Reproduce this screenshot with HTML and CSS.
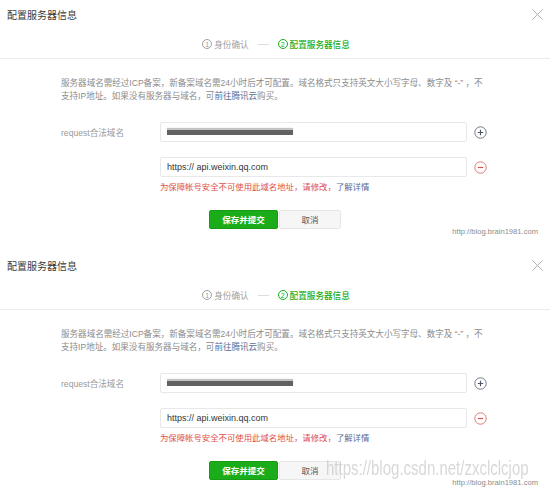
FILE: index.html
```html
<!DOCTYPE html>
<html lang="zh-CN">
<head>
<meta charset="utf-8">
<title>配置服务器信息</title>
<link rel="stylesheet" href="styles.css">
</head>
<body>
<div class="page">
  <section class="dialog">
    <div class="header">
      <span class="title">配置服务器信息</span>
      <svg class="close" width="11" height="11" viewBox="0 0 11 11"><path d="M0.5 0.5 L10.5 10.5 M10.5 0.5 L0.5 10.5" stroke="#a8a8a8" stroke-width="0.9" fill="none"/></svg>
    </div>
    <div class="steps">
      <span class="step done"><span class="num">1</span>身份确认</span>
      <span class="step-line"></span>
      <span class="step current"><span class="num">2</span>配置服务器信息</span>
    </div>
    <div class="body">
      <p class="desc">服务器域名需经过ICP备案，新备案域名需24小时后才可配置。域名格式只支持英文大小写字母、数字及 “-” ，不<br>支持IP地址。如果没有服务器与域名，可<a class="link">前往腾讯云</a>购买。</p>
      <div class="row first">
        <span class="label">request合法域名</span>
        <div class="input"><span class="redacted"></span></div>
        <svg class="icon" width="13" height="13" viewBox="0 0 13 13"><circle cx="6.5" cy="6.5" r="5.7" stroke="#6f7789" stroke-width="1" fill="none"/><path d="M3.8 6.5 H9.2 M6.5 3.8 V9.2" stroke="#4f5668" stroke-width="1.2"/></svg>
      </div>
      <div class="row second">
        <span class="label"></span>
        <div class="input"><span class="val">https:// api.weixin.qq.com</span></div>
        <svg class="icon" width="13" height="13" viewBox="0 0 13 13"><circle cx="6.5" cy="6.5" r="5.7" stroke="#e07a76" stroke-width="1" fill="none"/><path d="M3.8 6.5 H9.2" stroke="#d9534f" stroke-width="1.2"/></svg>
      </div>
      <p class="error">为保障帐号安全不可使用此域名地址，请修改，<a class="link">了解详情</a></p>
      <div class="buttons">
        <button class="btn primary">保存并提交</button>
        <button class="btn default">取消</button>
      </div>
    </div>
    <span class="mark">http://blog.brain1981.com</span>
  </section>

  <section class="dialog">
    <div class="header">
      <span class="title">配置服务器信息</span>
      <svg class="close" width="11" height="11" viewBox="0 0 11 11"><path d="M0.5 0.5 L10.5 10.5 M10.5 0.5 L0.5 10.5" stroke="#a8a8a8" stroke-width="0.9" fill="none"/></svg>
    </div>
    <div class="steps">
      <span class="step done"><span class="num">1</span>身份确认</span>
      <span class="step-line"></span>
      <span class="step current"><span class="num">2</span>配置服务器信息</span>
    </div>
    <div class="body">
      <p class="desc">服务器域名需经过ICP备案，新备案域名需24小时后才可配置。域名格式只支持英文大小写字母、数字及 “-” ，不<br>支持IP地址。如果没有服务器与域名，可<a class="link">前往腾讯云</a>购买。</p>
      <div class="row first">
        <span class="label">request合法域名</span>
        <div class="input"><span class="redacted"></span></div>
        <svg class="icon" width="13" height="13" viewBox="0 0 13 13"><circle cx="6.5" cy="6.5" r="5.7" stroke="#6f7789" stroke-width="1" fill="none"/><path d="M3.8 6.5 H9.2 M6.5 3.8 V9.2" stroke="#4f5668" stroke-width="1.2"/></svg>
      </div>
      <div class="row second">
        <span class="label"></span>
        <div class="input"><span class="val">https:// api.weixin.qq.com</span></div>
        <svg class="icon" width="13" height="13" viewBox="0 0 13 13"><circle cx="6.5" cy="6.5" r="5.7" stroke="#e07a76" stroke-width="1" fill="none"/><path d="M3.8 6.5 H9.2" stroke="#d9534f" stroke-width="1.2"/></svg>
      </div>
      <p class="error">为保障帐号安全不可使用此域名地址，请修改，<a class="link">了解详情</a></p>
      <div class="buttons">
        <button class="btn primary">保存并提交</button>
        <button class="btn default">取消</button>
      </div>
    </div>
    <span class="csdn">https://blog.csdn.net/zxclclcjop</span>
    <span class="mark">http://blog.brain1981.com</span>
  </section>
</div>
</body>
</html>
```

FILE: styles.css
```css
* { box-sizing: border-box; }
html, body { margin: 0; padding: 0; }
body {
  background: #ffffff;
  font-family: "Liberation Sans", "Noto Sans CJK SC", sans-serif;
  color: #333;
  height: 493px;
  overflow: hidden;
}
.page { width: 550px; }
.dialog {
  position: relative;
  height: 251px;
}
.header {
  height: 30px;
  display: flex;
  align-items: center;
  justify-content: space-between;
  padding: 0 7px 2px 7px;
}
.title {
  font-family: "Noto Sans CJK SC", sans-serif;
  font-size: 10px;
  color: #3a3a3a;
}
.close { display: block; }
.steps {
  height: 29px;
  display: flex;
  align-items: center;
  justify-content: center;
  gap: 9px;
  border-bottom: 1px solid #ececec;
  font-family: "Noto Sans CJK SC", sans-serif;
  font-size: 8.6px;
  padding-left: 2px;
}
.step { display: flex; align-items: center; gap: 2px; }
.step .num {
  width: 10px;
  height: 10px;
  border-radius: 50%;
  border: 1px solid currentColor;
  display: inline-flex;
  align-items: center;
  justify-content: center;
  font-family: "Liberation Sans", sans-serif;
  font-size: 7px;
  line-height: 1;
}
.step.done { color: #a0a0a0; }
.step.current { color: #1aad19; font-weight: 500; }
.step-line { width: 11px; height: 1px; background: #dcdcdc; }
.body { padding: 18px 0 0 61px; }
.desc {
  margin: 0;
  font-size: 8.55px;
  line-height: 13px;
  color: #8c8c8c;
  white-space: nowrap;
}
.link { color: #576b95; text-decoration: none; }
.row { display: flex; align-items: center; }
.row.first { margin-top: 19px; }
.row.second { margin-top: 15px; }
.label {
  width: 99px;
  font-size: 8.6px;
  color: #9a9a9a;
}
.input {
  width: 307px;
  height: 20px;
  border: 1px solid #e8e8e8;
  border-radius: 2px;
  background: #fff;
  display: flex;
  align-items: center;
  padding-left: 6px;
}
.val { font-size: 9px; color: #353535; }
.redacted {
  display: block;
  width: 126px;
  height: 5px;
  background: #626262;
  box-shadow: 0 -2px 1px #c4c4c4;
  filter: blur(0.5px);
}
.icon { margin-left: 7px; display: block; }
.error {
  margin: 4px 0 0 99px;
  font-size: 8.4px;
  line-height: 12px;
  color: #e0504b;
}
.buttons {
  margin: 17px 0 0 148px;
  display: flex;
  gap: 1px;
}
.btn {
  height: 19px;
  border-radius: 2px;
  font-family: "Noto Sans CJK SC", sans-serif;
  font-size: 8.5px;
  padding: 0;
  line-height: 17px;
}
.btn.primary {
  width: 69px;
  background: #1aad19;
  border: 1px solid #179b16;
  color: #fff;
  font-weight: 700;
}
.btn.default {
  width: 62px;
  background: #f6f6f6;
  border: 1px solid #e6e6e6;
  color: #555;
}
.mark {
  position: absolute;
  right: 12px;
  top: 227px;
  font-family: "Liberation Sans", sans-serif;
  font-size: 7.6px;
  line-height: 10px;
  color: #8c8c8c;
}
.csdn {
  position: absolute;
  left: 326px;
  top: 209px;
  font-family: "Liberation Sans", sans-serif;
  font-size: 15px;
  line-height: 18px;
  color: rgba(190, 190, 190, 0.6);
  white-space: nowrap;
  transform: scaleY(1.3);
  transform-origin: left center;
}
```
